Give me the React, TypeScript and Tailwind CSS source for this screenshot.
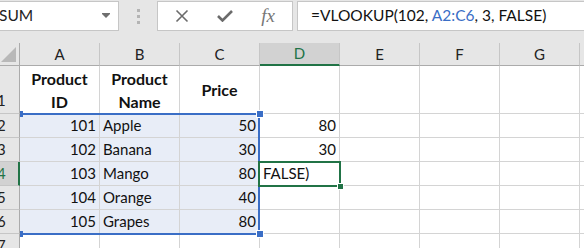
import React from "react"

const COLS = ["A", "B", "C", "D", "E", "F", "G", "H"]

type Cell = { text?: string; align?: "left" | "right" | "center"; bold?: boolean }

const ROWS: { n: number; h: string; cells: Cell[] }[] = [
    {
        n: 1,
        h: "h-[48px]",
        cells: [
            { text: "Product\nID", align: "center", bold: true },
            { text: "Product\nName", align: "center", bold: true },
            { text: "Price", align: "center", bold: true },
        ],
    },
    { n: 2, h: "h-[24px]", cells: [{ text: "101", align: "right" }, { text: "Apple" }, { text: "50", align: "right" }, { text: "80", align: "right" }] },
    { n: 3, h: "h-[24px]", cells: [{ text: "102", align: "right" }, { text: "Banana" }, { text: "30", align: "right" }, { text: "30", align: "right" }] },
    { n: 4, h: "h-[24px]", cells: [{ text: "103", align: "right" }, { text: "Mango" }, { text: "80", align: "right" }, { text: "FALSE)" }] },
    { n: 5, h: "h-[24px]", cells: [{ text: "104", align: "right" }, { text: "Orange" }, { text: "40", align: "right" }] },
    { n: 6, h: "h-[24px]", cells: [{ text: "105", align: "right" }, { text: "Grapes" }, { text: "80", align: "right" }] },
    { n: 7, h: "h-[24px]", cells: [] },
]

function FormulaBar() {
    return (
        <div className="h-[43px] bg-[#e6e6e6] flex items-start pt-[1px]">
            {/* Name box */}
            <div className="w-[119px] h-[30px] bg-white border border-l-0 border-[#c6c6c6] flex items-center justify-between pr-[8px]">
                <span className="-ml-[1px] text-[15.5px] text-[#222]">SUM</span>
                <svg width="8" height="6" viewBox="0 0 8 6">
                    <rect x="0" y="0" width="8" height="1" fill="#6f6f6f" />
                    <path d="M0 1 L8 1 L4 5 Z" fill="#6f6f6f" />
                </svg>
            </div>

            {/* grip */}
            <div className="w-[38px] h-[30px] flex flex-col items-center justify-center gap-[3px]">
                <div className="w-[3px] h-[3px] bg-[#b4b4b4]" />
                <div className="w-[3px] h-[3px] bg-[#b4b4b4]" />
                <div className="w-[3px] h-[3px] bg-[#b4b4b4]" />
            </div>

            {/* cancel / enter / fx */}
            <div className="w-[136px] h-[30px] bg-white border border-[#c6c6c6] flex items-center">
                <div className="w-[48px] flex justify-center">
                    <svg width="14" height="14" viewBox="0 0 14 14">
                        <path d="M1.5 1.5 L12.5 12.5 M12.5 1.5 L1.5 12.5" stroke="#6b6b6b" strokeWidth="1.6" />
                    </svg>
                </div>
                <div className="w-[38px] flex justify-center">
                    <svg width="16" height="12" viewBox="0 0 16 12">
                        <path d="M1 6 L5.5 10.5 L15 1" stroke="#6b6b6b" strokeWidth="2.6" fill="none" />
                    </svg>
                </div>
                <div className="w-[48px] flex justify-center">
                    <span className="font-['Liberation_Serif',serif] italic text-[19px] text-[#777] leading-none -mt-[2px]">
                        fx
                    </span>
                </div>
            </div>

            {/* formula */}
            <div className="ml-[4px] flex-1 h-[30px] bg-white border border-r-0 border-[#c6c6c6] flex items-center pl-[13px]">
                <span className="text-[15.5px] text-[#111] whitespace-nowrap">
                    =VLOOKUP(102, <span className="text-[#3a6ec6]">A2:C6</span>, 3, FALSE)
                </span>
            </div>
        </div>
    )
}

function ColumnHeader() {
    return (
        <div className="flex h-[23px]">
            <div className="w-[20px] shrink-0 bg-[#e6e6e6] border-r border-b border-[#ababab] flex items-end justify-end pr-[3px] pb-[3px]">
                <svg width="15" height="15" viewBox="0 0 15 15">
                    <path d="M15 0 L15 15 L0 15 Z" fill="#b8b8b8" />
                </svg>
            </div>
            {COLS.map((c) => {
                const active = c === "D"
                return (
                    <div
                        key={c}
                        className={
                            active
                                ? "w-[80px] shrink-0 bg-[#d2d2d2] border-r border-[#c6c6c6] border-b-2 border-b-[#217346] flex items-center justify-center text-[15px] text-[#217346]"
                                : "w-[80px] shrink-0 bg-[#e6e6e6] border-r border-[#c6c6c6] border-b border-b-[#ababab] flex items-center justify-center text-[15px] text-[#222]"
                        }
                    >
                        {c}
                    </div>
                )
            })}
        </div>
    )
}

function Row({ n, h, cells }: { n: number; h: string; cells: Cell[] }) {
    const activeRow = n === 4
    return (
        <div className={`flex ${h}`}>
            <div
                className={
                    activeRow
                        ? "w-[20px] shrink-0 bg-[#d2d2d2] border-b border-[#c6c6c6] border-r-2 border-r-[#217346] flex items-center text-[15px] text-[#217346] overflow-hidden"
                        : `w-[20px] shrink-0 bg-[#e6e6e6] border-b border-[#c6c6c6] border-r border-r-[#ababab] flex text-[15px] text-[#222] overflow-hidden ${n === 1 ? "items-end pb-[2px]" : "items-center"}`
                }
            >
                <span className="-ml-[3px]">{n}</span>
            </div>
            {COLS.map((c, i) => {
                const cell = cells[i]
                const selected = n >= 2 && n <= 6 && i <= 2
                const align =
                    cell?.align === "right" ? "justify-end pr-[3px]" : cell?.align === "center" ? "justify-center text-center" : "justify-start pl-[3px]"
                return (
                    <div
                        key={c}
                        className={`w-[80px] shrink-0 border-r border-b border-[#d4d4d4] flex items-center text-[#111] ${align} ${
                            selected ? "bg-[#e8edf7]" : "bg-white"
                        } ${cell?.bold ? "font-bold text-[16px] leading-[23px] whitespace-pre-line" : "text-[15px]"}`}
                    >
                        {cell?.text}
                    </div>
                )
            })}
        </div>
    )
}

export default function App() {
    return (
        <div className="w-[584px] h-[248px] overflow-hidden bg-white font-['Lato',sans-serif]">
            <FormulaBar />
            <div className="relative">
                <ColumnHeader />
                {ROWS.map((r) => (
                    <Row key={r.n} {...r} />
                ))}

                {/* referenced range A2:C6 */}
                <div className="absolute left-[20px] top-[70px] w-[240px] h-[122px] border-2 border-l-0 border-[#3a6ec6]" />
                <div className="absolute left-[256px] top-[67px] w-[8px] h-[8px] bg-[#3a6ec6] border border-white" />
                <div className="absolute left-[256px] top-[187px] w-[8px] h-[8px] bg-[#3a6ec6] border border-white" />
                <div className="absolute left-[20px] top-[68px] w-[3px] h-[6px] bg-[#3a6ec6]" />
                <div className="absolute left-[20px] top-[188px] w-[3px] h-[6px] bg-[#3a6ec6]" />

                {/* active cell D4 */}
                <div className="absolute left-[258px] top-[118px] w-[83px] h-[26px] border-2 border-[#217346]" />
                <div className="absolute left-[337px] top-[140px] w-[7px] h-[7px] bg-[#217346] border border-white" />
            </div>
        </div>
    )
}
